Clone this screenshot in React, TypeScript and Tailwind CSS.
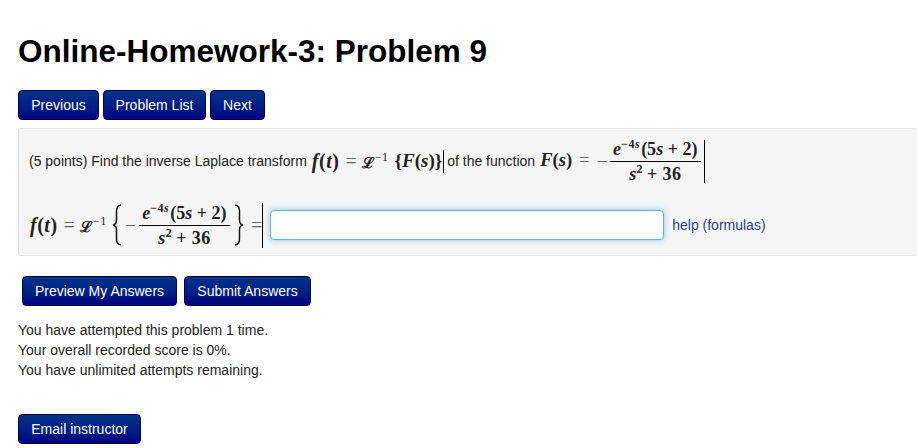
import React, { ReactNode } from 'react';

const navButton =
  'h-[30px] rounded-[4px] border border-[#00004d] bg-gradient-to-b from-[#003388] to-[#000080] text-[14px] leading-none text-white';

const I: React.FC<{ children: ReactNode }> = ({ children }) => <span className="italic">{children}</span>;

const Caret: React.FC<{ className: string }> = ({ className }) => <span className={`inline-block w-[1px] bg-black ${className}`} />;

const Up: React.FC<{ children: ReactNode }> = ({ children }) => (
  <span className="align-[7px] text-[12px] leading-[0] tracking-[0.5px]">{children}</span>
);

// f(t) = L^-1 prefix shows up in both lines
const InverseOf: React.FC = () => (
  <span className="whitespace-nowrap font-['Liberation_Serif',serif] text-[20px] font-bold text-[#222]">
    <span className="tracking-[0.5px]"><I>f</I>(<I>t</I>)</span>
    <span className="ml-[6px] mr-[5px] font-normal text-[#666]">=</span>
    <span className="text-[15px]">ℒ</span>
    <span className="font-normal"><Up>−1</Up></span>
  </span>
);

const Fraction: React.FC = () => (
  <span className="inline-flex w-[91px] flex-col items-center font-['Liberation_Serif',serif] font-bold text-[#222]">
    <span className="h-[26px] w-full whitespace-nowrap border-b border-black text-center text-[18px] leading-[27px]">
      <I>e</I>
      <Up>−4<I>s</I></Up>
      <span className="ml-[1px]">(5<I>s</I> + 2)</span>
    </span>
    <span className="h-[25px] whitespace-nowrap text-[18px] leading-[25px] tracking-[0.4px]">
      <I>s</I>
      <Up>2</Up>
      <span className="ml-[4px]">+ 36</span>
    </span>
  </span>
);

const Brace: React.FC<{ flip?: boolean }> = ({ flip }) => (
  <svg width="10" height="42" viewBox="0 0 10 42" className={flip ? '-scale-x-100' : ''} fill="none" stroke="#111" strokeWidth="1.5">
    <path d="M9 1 C5.5 1.5 4.5 4 4.5 7 L4.5 16 C4.5 19 3.5 20.5 1 21 C3.5 21.5 4.5 23 4.5 26 L4.5 35 C4.5 38 5.5 40.5 9 41" />
  </svg>
);

export default function App() {
  return (
    <div className="h-[448px] w-[917px] overflow-hidden bg-white font-['Liberation_Sans',Arial,sans-serif] text-[14px] text-[#111]">
      <h1 className="pl-[18px] pt-[33px] text-[31.5px] font-bold leading-[36px] text-black">Online-Homework-3: Problem 9</h1>

      <div className="ml-[18px] mt-[21px] flex gap-1">
        <button className={`w-[81px] ${navButton}`}>Previous</button>
        <button className={`w-[103px] ${navButton}`}>Problem List</button>
        <button className={`w-[55px] ${navButton}`}>Next</button>
      </div>

      <div className="ml-[18px] mt-2 h-[128px] w-[920px] rounded-[3px] border border-[#e3e3e3] bg-[#f5f5f5] pl-[10px]">
        <div className="flex h-[64px] items-center whitespace-nowrap">
          <span className="text-[#222]">(5 points) Find the inverse Laplace transform</span>
          <span className="ml-[5px]"><InverseOf /></span>
          <span className="ml-[6px] font-['Liberation_Serif',serif] text-[19px] font-bold text-[#222]">
            {'{'}<I>F</I>(<I>s</I>){'}'}
          </span>
          <Caret className="ml-[1px] h-[23px]" />
          <span className="ml-[3px] text-[#222]">of the function</span>
          <span className="ml-[5px] font-['Liberation_Serif',serif] text-[18.5px] font-bold text-[#222]">
            <I>F</I>(<I>s</I>)
            <span className="mx-[7px] font-normal text-[#666]">=</span>
          </span>
          <span className="mr-[2px] font-['Liberation_Serif',serif] text-[20px] text-[#666]">−</span>
          <Fraction />
          <Caret className="ml-[3px] h-[43px]" />
        </div>

        <div className="mt-[2px] flex h-[60px] items-center whitespace-nowrap">
          <span className="ml-[1px]"><InverseOf /></span>
          <span className="ml-[5px] flex items-center font-['Liberation_Serif',serif]">
            <Brace />
            <span className="mx-[3px] text-[20px] text-[#666]">−</span>
            <Fraction />
            <span className="ml-[4px]"><Brace flip /></span>
            <span className="ml-[7px] text-[20px] text-[#666]">=</span>
          </span>
          <Caret className="h-[45px]" />
          <input
            type="text"
            className="ml-[7px] h-[30px] w-[394px] rounded-[4px] border border-[#66afe9] bg-white shadow-[0_0_6px_rgba(102,175,233,0.7)] outline-none"
          />
          <a className="ml-2 text-[#2b3f8c]">help (formulas)</a>
        </div>
      </div>

      <div className="ml-[22px] mt-5 flex gap-[7px]">
        <button className={`w-[155px] ${navButton}`}>Preview My Answers</button>
        <button className={`w-[127px] ${navButton}`}>Submit Answers</button>
      </div>

      <div className="ml-[18px] mt-[14px] leading-[20px] text-[#222]">
        <p>You have attempted this problem 1 time.</p>
        <p>Your overall recorded score is 0%.</p>
        <p>You have unlimited attempts remaining.</p>
      </div>

      <button className={`ml-[18px] mt-[34px] w-[123px] ${navButton}`}>Email instructor</button>
    </div>
  );
}
